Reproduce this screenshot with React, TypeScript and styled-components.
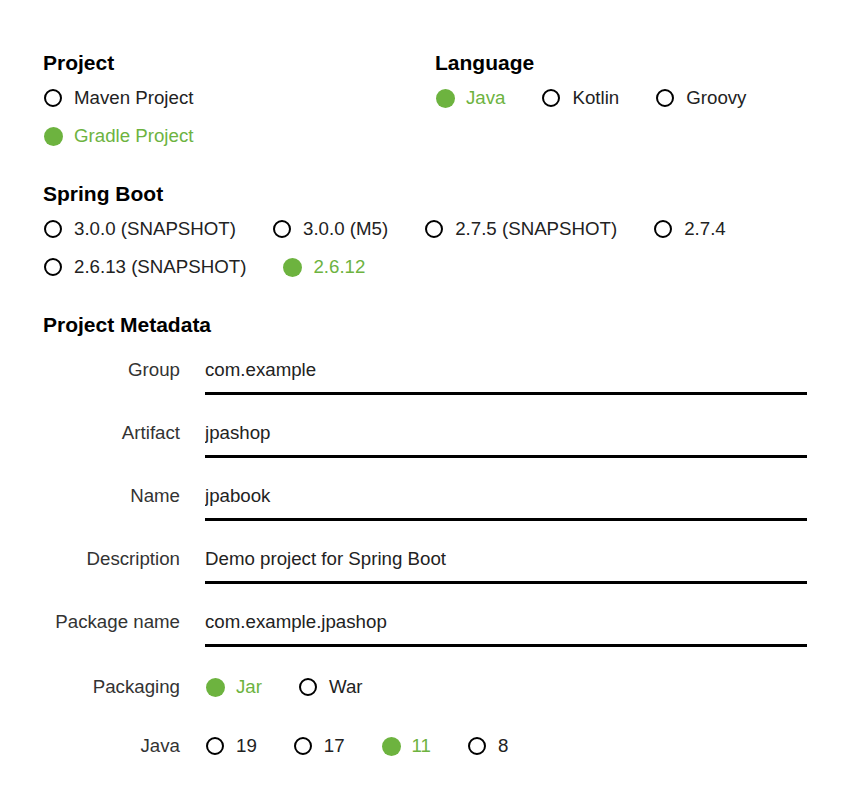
import React, { useState } from 'react';
import styled, { createGlobalStyle } from 'styled-components';

const GREEN = '#6db33f';

const Global = createGlobalStyle`
  html, body {
    margin: 0;
    padding: 0;
    background: #fff;
  }
  body {
    font-family: "Liberation Sans", Arial, sans-serif;
    color: #222;
  }
`;

const Page = styled.div`
  padding: 51px 40px 30px 43px;
  display: flex;
  flex-direction: column;
  gap: 27px;
`;

const TopRow = styled.div`
  display: flex;
`;

const Column = styled.section<{ $width?: number }>`
  display: flex;
  flex-direction: column;
  gap: 4px;
  width: ${(p) => (p.$width ? `${p.$width}px` : 'auto')};
`;

const Title = styled.h2`
  margin: 0;
  font-size: 21px;
  line-height: 24px;
  font-weight: bold;
  color: #000;
`;

const Options = styled.div<{ $column?: boolean }>`
  display: flex;
  flex-direction: ${(p) => (p.$column ? 'column' : 'row')};
  flex-wrap: wrap;
  align-items: flex-start;
`;

const Option = styled.label<{ $checked: boolean }>`
  display: flex;
  align-items: center;
  height: 38px;
  margin-right: 36px;
  font-size: 18.7px;
  color: ${(p) => (p.$checked ? GREEN : '#222')};
  cursor: pointer;
  white-space: nowrap;
`;

const Dot = styled.span<{ $checked: boolean }>`
  box-sizing: border-box;
  width: ${(p) => (p.$checked ? 19 : 18)}px;
  height: ${(p) => (p.$checked ? 19 : 18)}px;
  margin-left: 1px;
  margin-right: ${(p) => (p.$checked ? 11 : 12)}px;
  border-radius: 50%;
  border: ${(p) => (p.$checked ? 'none' : '2px solid #000')};
  background: ${(p) => (p.$checked ? GREEN : '#fff')};
  flex-shrink: 0;
`;

const Fields = styled.div`
  display: flex;
  flex-direction: column;
  gap: 21px;
  margin-top: 12px;
`;

const FieldRow = styled.div<{ $center?: boolean }>`
  display: flex;
  align-items: ${(p) => (p.$center ? 'center' : 'flex-start')};
`;

const Label = styled.div<{ $pad?: boolean }>`
  width: 137px;
  flex-shrink: 0;
  margin-right: 25px;
  text-align: right;
  font-size: 18.7px;
  line-height: 24px;
  padding-top: ${(p) => (p.$pad ? 5 : 0)}px;
  color: #333;
  white-space: nowrap;
`;

const Input = styled.input`
  flex: 1;
  min-width: 0;
  font-family: inherit;
  font-size: 18.7px;
  line-height: 24px;
  height: 42px;
  box-sizing: border-box;
  padding: 5px 0 10px 0;
  border: none;
  border-bottom: 3px solid #000;
  outline: none;
  color: #222;
  background: transparent;
`;

type RadioGroupProps = {
  options: string[];
  value: string;
  onChange: (v: string) => void;
  column?: boolean;
};

const RadioGroup = ({ options, value, onChange, column }: RadioGroupProps) => (
  <Options $column={column}>
    {options.map((o) => (
      <Option key={o} $checked={o === value} onClick={() => onChange(o)}>
        <Dot $checked={o === value} />
        {o}
      </Option>
    ))}
  </Options>
);

const metadata = [
  { label: 'Group', value: 'com.example' },
  { label: 'Artifact', value: 'jpashop' },
  { label: 'Name', value: 'jpabook' },
  { label: 'Description', value: 'Demo project for Spring Boot' },
  { label: 'Package name', value: 'com.example.jpashop' },
];

export default function App() {
  const [project, setProject] = useState('Gradle Project');
  const [language, setLanguage] = useState('Java');
  const [boot, setBoot] = useState('2.6.12');
  const [packaging, setPackaging] = useState('Jar');
  const [java, setJava] = useState('11');
  const [values, setValues] = useState(metadata.map((m) => m.value));

  return (
    <>
      <Global />
      <Page>
        <TopRow>
          <Column $width={392}>
            <Title>Project</Title>
            <RadioGroup
              column
              options={['Maven Project', 'Gradle Project']}
              value={project}
              onChange={setProject}
            />
          </Column>
          <Column>
            <Title>Language</Title>
            <RadioGroup options={['Java', 'Kotlin', 'Groovy']} value={language} onChange={setLanguage} />
          </Column>
        </TopRow>

        <Column>
          <Title>Spring Boot</Title>
          <RadioGroup
            options={['3.0.0 (SNAPSHOT)', '3.0.0 (M5)', '2.7.5 (SNAPSHOT)', '2.7.4', '2.6.13 (SNAPSHOT)', '2.6.12']}
            value={boot}
            onChange={setBoot}
          />
        </Column>

        <Column>
          <Title>Project Metadata</Title>
          <Fields>
            {metadata.map((m, i) => (
              <FieldRow key={m.label}>
                <Label $pad>{m.label}</Label>
                <Input
                  value={values[i]}
                  onChange={(e) => setValues(values.map((v, j) => (j === i ? e.target.value : v)))}
                />
              </FieldRow>
            ))}
            <FieldRow $center>
              <Label>Packaging</Label>
              <RadioGroup options={['Jar', 'War']} value={packaging} onChange={setPackaging} />
            </FieldRow>
            <FieldRow $center>
              <Label>Java</Label>
              <RadioGroup options={['19', '17', '11', '8']} value={java} onChange={setJava} />
            </FieldRow>
          </Fields>
        </Column>
      </Page>
    </>
  );
}
